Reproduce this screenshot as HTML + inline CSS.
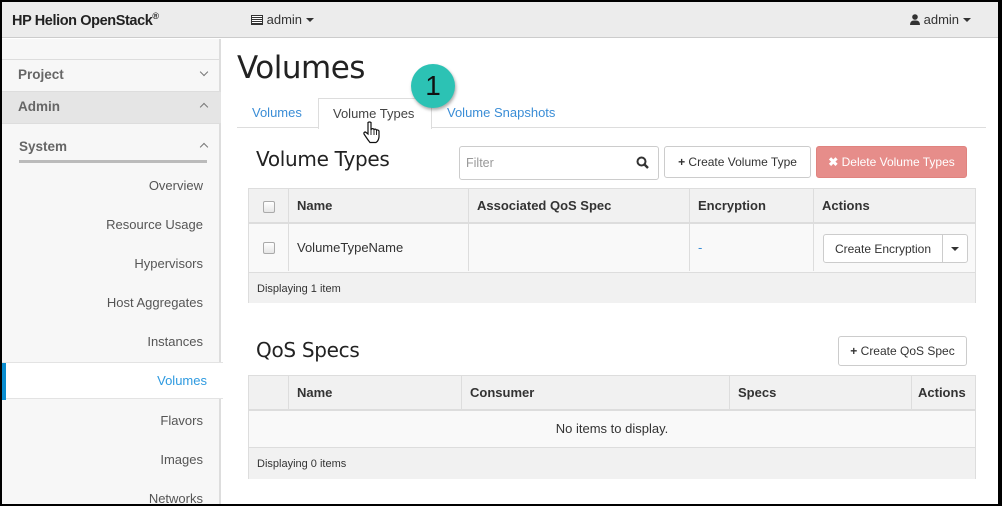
<!DOCTYPE html>
<html><head><meta charset="utf-8"><style>
*{box-sizing:border-box;margin:0;padding:0}
body{width:1002px;height:506px;background:#000;position:relative;overflow:hidden;font-family:"Liberation Sans",sans-serif;font-size:13px;color:#333}
.a{position:absolute}
#pg{left:2px;top:2px;width:996px;height:502px;background:#fff;overflow:hidden}
.hdr{left:0;top:0;width:996px;height:36px;background:#ececec;border-bottom:1px solid #ccc}
.side{left:0;top:37px;width:219px;height:470px;background:#f7f7f7;border-right:2px solid #ddd}
.si{position:absolute;right:16px;font-size:13px;color:#555}
.sec{position:absolute;left:0;width:219px;height:32px;border-top:1px solid #ddd;font-weight:bold;color:#666;font-size:13.5px;padding:7px 0 0 16px}
.chev{position:absolute;right:14px;top:9px;width:6px;height:6px;border-right:1px solid #777;border-bottom:1px solid #777;transform:rotate(45deg)}
.chev.up{transform:rotate(-135deg);top:12px}
.btn{position:absolute;border:1px solid #ccc;border-radius:3px;background:#fff;font-size:12px;color:#333;text-align:center}
.tb{position:absolute;border:1px solid #ddd;background:#f9f9f9}
.th{position:absolute;top:0;height:35px;background:#f1f1f1;border-right:1px solid #ddd;border-bottom:2px solid #ddd;font-weight:bold;font-size:13px;padding:9px 0 0 8px;color:#333}
.td{position:absolute;border-right:1px solid #ddd;font-size:13px}
.ft{position:absolute;left:0;width:100%;background:#f1f1f1;border-top:1px solid #ddd;font-size:11px;padding:10px 0 0 8px}
.cb{position:absolute;width:12px;height:12px;border:1px solid #aaa;border-radius:2px;background:linear-gradient(#fff,#e6e6e6)}
</style></head><body>
<div id="pg" class="a">
<div class="a hdr">
<div class="a" style="left:10px;top:9px;font-weight:bold;font-size:14.5px;color:#222;letter-spacing:-0.4px">HP Helion OpenStack<sup style="font-size:9px">®</sup></div>
<div class="a" style="left:249px;top:10px;font-size:13px;color:#333"><span style="display:inline-block;width:12px;height:10px;border:1.5px solid #333;vertical-align:-1px;background:repeating-linear-gradient(#fff 0 1px,#333 1px 2px)"></span> admin <span style="display:inline-block;border-left:4px solid transparent;border-right:4px solid transparent;border-top:4px solid #333;vertical-align:2px"></span></div>
<div class="a" style="left:908px;top:10px;font-size:13px;color:#333"><svg width="10" height="11" viewBox="0 0 10 11" style="vertical-align:-1px"><circle cx="5" cy="3" r="2.8" fill="#333"/><path d="M0 11 Q0 6 5 6.5 Q10 6 10 11Z" fill="#333"/></svg> admin <span style="display:inline-block;border-left:4px solid transparent;border-right:4px solid transparent;border-top:4px solid #333;vertical-align:2px"></span></div>
</div>
<div class="a side">
<div class="sec" style="top:20px">Project<span class="chev"></span></div>
<div class="sec" style="top:52px;background:#e5e5e5">Admin<span class="chev up"></span></div>
<div class="sec" style="top:84px;border-top:1px solid #ddd;height:40px;padding-left:17px;padding-top:15px">System<span class="chev up" style="top:20px"></span><div class="a" style="left:17px;top:36px;width:188px;height:3px;background:#bbb"></div></div>
<div class="si" style="top:139px">Overview</div>
<div class="si" style="top:178px">Resource Usage</div>
<div class="si" style="top:217px">Hypervisors</div>
<div class="si" style="top:256px">Host Aggregates</div>
<div class="si" style="top:295px">Instances</div>
<div class="a" style="left:0;top:323px;width:221px;height:37px;background:#fff;border-top:1px solid #e3e3e3;border-bottom:1px solid #e3e3e3"><div class="a" style="left:0;top:0;width:4px;height:37px;background:#0a8dd0"></div><div class="a" style="right:16px;top:10px;color:#2e9ae0;font-size:13px">Volumes</div></div>
<div class="si" style="top:374px">Flavors</div>
<div class="si" style="top:413px">Images</div>
<div class="si" style="top:452px">Networks</div>
</div>

<div class="a" style="left:235px;top:48px;font-family:'DejaVu Sans',sans-serif;font-size:31px;color:#222;letter-spacing:-0.5px">Volumes</div>
<div class="a" style="left:235px;top:125px;width:749px;height:1px;background:#ddd"></div>
<div class="a" style="left:250px;top:103px;color:#3a8dd6;font-size:13px">Volumes</div>
<div class="a" style="left:316px;top:96px;width:114px;height:31px;background:#fff;border:1px solid #ddd;border-bottom:none;padding:7px 0 0 14px;font-size:13px;color:#444">Volume Types</div>
<div class="a" style="left:445px;top:103px;color:#3a8dd6;font-size:13px">Volume Snapshots</div>
<div class="a" style="left:409px;top:62px;width:44px;height:44px;border-radius:50%;background:#2cc2b4;box-shadow:1px 2px 3px rgba(0,0,0,.35);text-align:center;font-family:'Liberation Sans',sans-serif;font-size:28px;line-height:44px;color:#111">1</div>
<svg class="a" style="left:361px;top:119px" width="18" height="24" viewBox="0 0 18 24"><path d="M5 1.5 Q6.5 0.5 8 1.5 L8 9 L8.5 8 Q10 7 11 8.5 Q12.5 7.5 13.5 9 Q15 8.5 16 10 L16 16 Q15.5 20 13 21.5 L7 21.5 Q5 19 3 16 L1 13 Q0.5 11 2.5 11 L5 13 Z" fill="#fff" stroke="#111" stroke-width="1.2"/><path d="M8 9 L8 14 M11 8.5 L11 14 M13.5 9 L13.5 14" stroke="#111" stroke-width="0.9"/></svg>

<div class="a" style="left:254px;top:145px;font-family:'DejaVu Sans',sans-serif;font-size:20px;color:#222;letter-spacing:-0.3px">Volume Types</div>
<div class="a" style="left:457px;top:144px;width:200px;height:34px;border:1px solid #ccc;border-radius:3px;padding:9px 6px;color:#999;font-size:12.5px">Filter<svg class="a" style="right:9px;top:9px" width="13" height="13" viewBox="0 0 13 13"><circle cx="5.5" cy="5.5" r="4" fill="none" stroke="#333" stroke-width="2"/><path d="M8.5 8.5 L12 12" stroke="#333" stroke-width="2.4"/></svg></div>
<div class="btn" style="left:662px;top:144px;width:147px;height:32px;padding-top:8px"><b>+</b> Create Volume Type</div>
<div class="btn" style="left:814px;top:144px;width:151px;height:32px;padding-top:8px;background:#e68d8a;border-color:#e0837f;color:#fff"><b>✖</b> Delete Volume Types</div>

<div class="tb" style="left:246px;top:186px;width:728px;height:115px">
<div class="th" style="left:0;width:40px"></div><div class="cb" style="left:14px;top:12px"></div>
<div class="th" style="left:40px;width:180px">Name</div>
<div class="th" style="left:220px;width:221px">Associated QoS Spec</div>
<div class="th" style="left:441px;width:124px">Encryption</div>
<div class="th" style="left:565px;width:161px;border-right:none">Actions</div>
<div class="td" style="left:0;top:35px;width:40px;height:47px"></div><div class="cb" style="left:14px;top:53px"></div>
<div class="td" style="left:40px;top:35px;width:180px;height:47px;padding:16px 0 0 8px">VolumeTypeName</div>
<div class="td" style="left:220px;top:35px;width:221px;height:47px"></div>
<div class="td" style="left:441px;top:35px;width:124px;height:47px;padding:16px 0 0 8px;color:#3a8dd6">-</div>
<div class="btn" style="left:574px;top:45px;width:120px;height:29px;padding-top:7px;border-radius:3px 0 0 3px">Create Encryption</div>
<div class="btn" style="left:693px;top:45px;width:26px;height:29px;padding-top:12px;border-radius:0 3px 3px 0"><span style="display:block;margin:0 auto;width:0;border-left:4px solid transparent;border-right:4px solid transparent;border-top:4px solid #333"></span></div>
<div class="ft" style="top:83px;height:31px">Displaying 1 item</div>
</div>

<div class="a" style="left:254px;top:336px;font-family:'DejaVu Sans',sans-serif;font-size:20px;color:#222;letter-spacing:-0.3px">QoS Specs</div>
<div class="btn" style="left:836px;top:334px;width:129px;height:30px;padding-top:7px"><b>+</b> Create QoS Spec</div>

<div class="tb" style="left:246px;top:373px;width:728px;height:104px">
<div class="th" style="left:0;width:40px"></div>
<div class="th" style="left:40px;width:173px">Name</div>
<div class="th" style="left:213px;width:268px">Consumer</div>
<div class="th" style="left:481px;width:182px">Specs</div>
<div class="th" style="left:663px;width:63px;border-right:none;padding-left:6px">Actions</div>
<div class="a" style="left:0;top:45px;width:726px;text-align:center;font-size:13px">No items to display.</div>
<div class="ft" style="top:71px;height:32px">Displaying 0 items</div>
</div>
</div>
</body></html>
